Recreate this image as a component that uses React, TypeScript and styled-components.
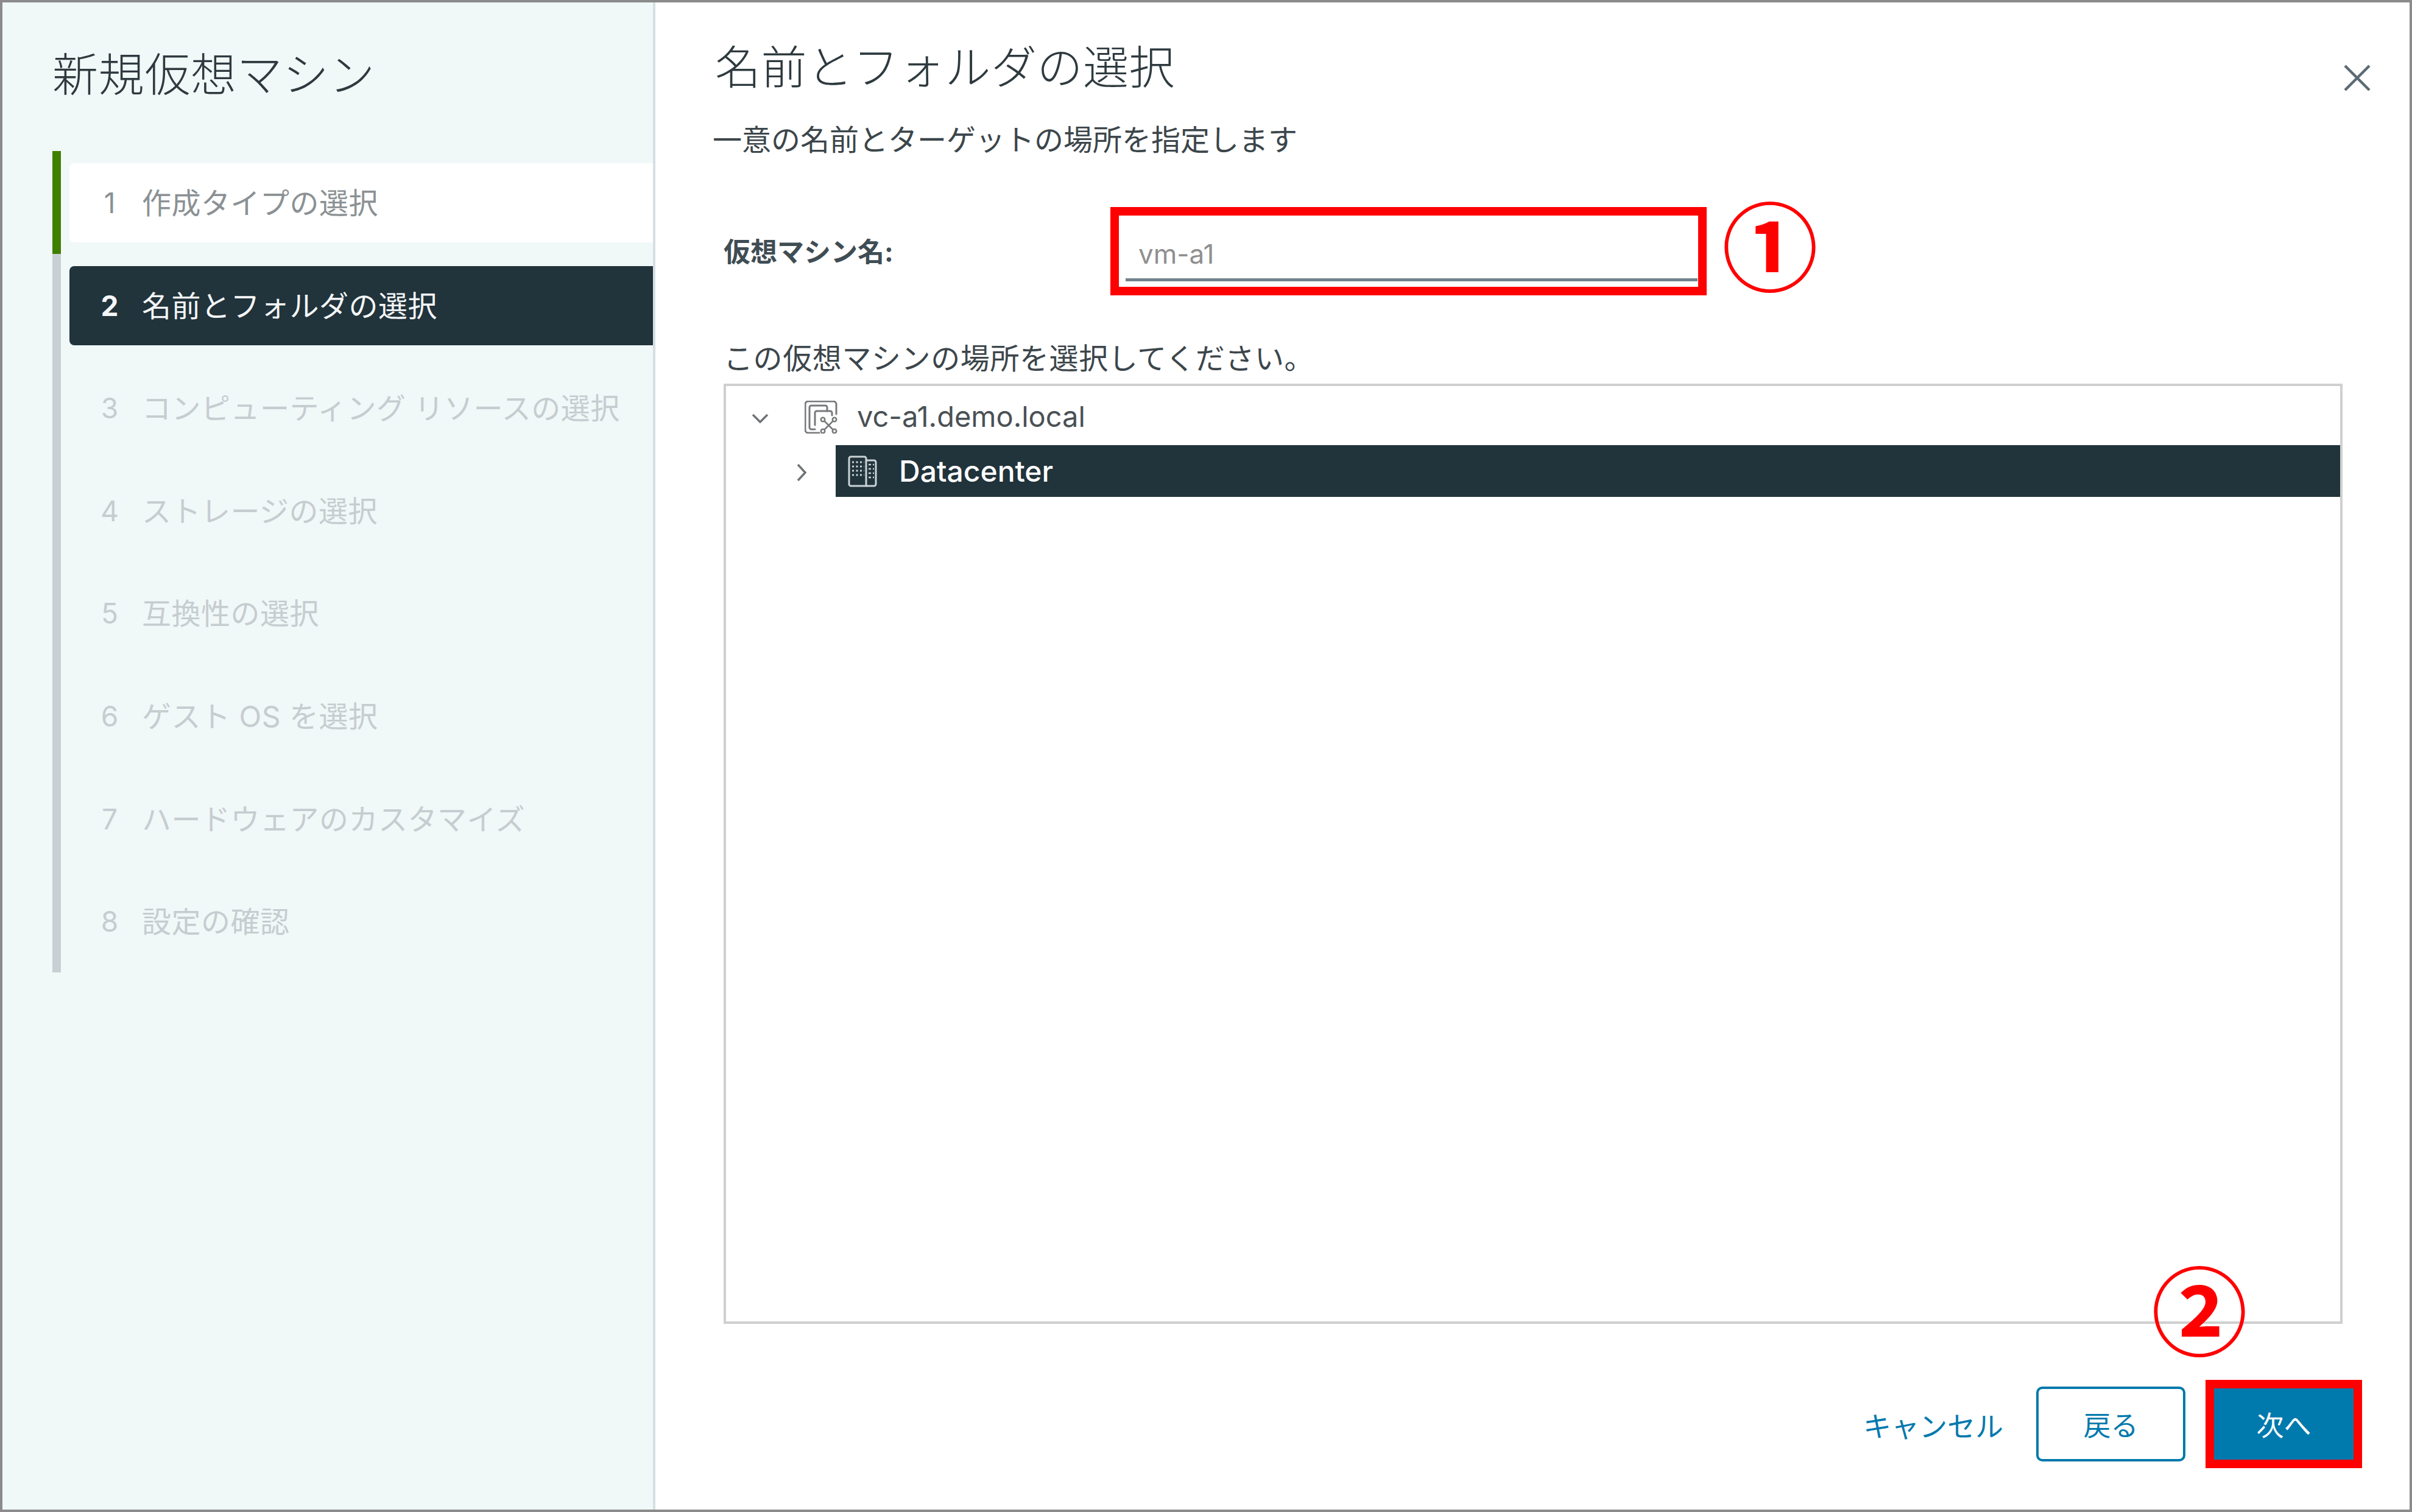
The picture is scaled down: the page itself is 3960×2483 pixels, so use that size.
import React from "react";
import styled, { createGlobalStyle } from "styled-components";

const FONT = `Inter, "Noto Sans CJK JP", sans-serif`;

const Global = createGlobalStyle`
  html, body { margin: 0; padding: 0; background: #fff; }
  body { font-family: ${FONT}; }
  * { box-sizing: border-box; }
`;

const Frame = styled.div`
  position: relative;
  width: 3960px;
  height: 2483px;
  display: flex;
  border: 4px solid #8b8b8b;
  background: #fff;
  overflow: hidden;
  font-family: ${FONT};
`;

const Sidebar = styled.aside`
  width: 1072px;
  flex: none;
  padding-left: 82px;
  background: #f1f8f8;
  border-right: 4px solid #d7dfe3;
  display: flex;
  flex-direction: column;
`;

const SideTitle = styled.h1`
  margin: 0;
  height: 244px;
  padding-top: 77px;
  font-size: 75px;
  line-height: 84px;
  font-weight: 300;
  letter-spacing: 0.7px;
  color: #2e3a3f;
  white-space: nowrap;
`;

const Steps = styled.ol`
  list-style: none;
  margin: 0;
  padding: 0;
`;

const StepRow = styled.li<{ $done?: boolean }>`
  height: 168.6px;
  padding: 20px 0 0 14px;
  border-left: 14px solid ${(p) => (p.$done ? "#3f7f00" : "#c9d0d4")};
`;

const StepBody = styled.div<{ $state: "done" | "current" | "todo" }>`
  height: 130px;
  display: flex;
  align-items: center;
  padding-left: 46px;
  border-radius: 8px 0 0 8px;
  font-size: 48px;
  white-space: nowrap;
  background: ${(p) =>
    p.$state === "done" ? "#fff" : p.$state === "current" ? "#21333b" : "transparent"};
  color: ${(p) =>
    p.$state === "done" ? "#8b9194" : p.$state === "current" ? "#f4f6f7" : "#c6cdd0"};
`;

const StepNum = styled.span<{ $bold?: boolean }>`
  width: 40px;
  margin-right: 33px;
  text-align: center;
  font-size: 46px;
  font-weight: ${(p) => (p.$bold ? 700 : 400)};
`;

const StepText = styled.span`
  padding-bottom: 6px;
  letter-spacing: 0.5px;
`;

const Main = styled.main`
  flex: 1;
  min-width: 0;
  padding: 0 110px 0 98px;
  display: flex;
  flex-direction: column;
`;

const HeaderRow = styled.header`
  height: 204px;
  margin-right: -46px;
  display: flex;
  justify-content: space-between;
  align-items: flex-start;
`;

const PageTitle = styled.h2`
  margin: 0;
  padding-top: 65px;
  font-size: 75px;
  line-height: 84px;
  font-weight: 300;
  letter-spacing: 0.5px;
  color: #2e3a3f;
  white-space: nowrap;
`;

const CloseBtn = styled.button`
  margin-top: 102px;
  width: 44px;
  height: 44px;
  padding: 0;
  border: 0;
  background: none;
  display: block;
`;

const Subtitle = styled.p`
  margin: 0 0 0 -4px;
  height: 44px;
  font-size: 48px;
  line-height: 44px;
  color: #3c464b;
  white-space: nowrap;
`;

const Form = styled.div`
  padding-left: 14px;
  display: flex;
  flex-direction: column;
  flex: none;
`;

const NameRow = styled.div`
  margin-top: 88px;
  height: 145px;
  display: flex;
  align-items: center;
`;

const NameLabel = styled.label`
  width: 635px;
  flex: none;
  padding-bottom: 4px;
  font-size: 44px;
  font-weight: 700;
  color: #3f4d54;
  white-space: nowrap;
`;

const NameField = styled.div`
  width: 979px;
  height: 145px;
  border: 14px solid #ff0000;
  padding: 0 1px 0 11px;
  background: #fff;
`;

const NameInput = styled.div`
  height: 108px;
  padding: 33px 0 0 21px;
  border-bottom: 5px solid #71848c;
  font-size: 44px;
  line-height: 60px;
  color: #8f8f8f;
`;

const Callout = styled.span<{ $x: number; $y: number }>`
  position: absolute;
  left: ${(p) => p.$x}px;
  top: ${(p) => p.$y}px;
  width: 170px;
  height: 170px;
  display: flex;
  align-items: center;
  justify-content: center;
  font-family: "Noto Sans CJK JP", sans-serif;
  font-size: 158px;
  line-height: 170px;
  font-weight: 700;
  color: #ff0000;
  z-index: 2;
`;

const LocationLabel = styled.div`
  margin-top: 74px;
  height: 71px;
  font-size: 48px;
  line-height: 60px;
  letter-spacing: 0.6px;
  color: #3c464b;
  white-space: nowrap;
`;

const Tree = styled.div`
  height: 1544px;
  border: 4px solid #cfcfcf;
  padding-top: 20px;
  flex: none;
`;

const TreeRow = styled.div<{ $selected?: boolean; $indent: number }>`
  display: flex;
  align-items: center;
  margin-left: ${(p) => p.$indent}px;
  height: ${(p) => (p.$selected ? 85 : 62)}px;
  margin-top: ${(p) => (p.$selected ? 15 : 0)}px;
`;

const Chevron = styled.svg<{ $w: number }>`
  width: ${(p) => p.$w}px;
  flex: none;
  display: block;
  margin-top: 4px;
`;

const TreeIconWrap = styled.span`
  display: inline-flex;
  flex: none;
  margin: 0 32px 0 59px;
`;

const NodeLabel = styled.span`
  padding-bottom: 4px;
  font-size: 47px;
  color: #4a5155;
  white-space: nowrap;
`;

const SelectedBar = styled.div`
  flex: 1;
  height: 85px;
  margin-left: 48px;
  padding-left: 20px;
  display: flex;
  align-items: center;
  background: #21333b;
  color: #fff;
  font-size: 48px;
  font-weight: 500;
`;

const SelectedLabel = styled.span`
  margin-left: 36px;
  white-space: nowrap;
`;

const Footer = styled.footer`
  margin-top: 92px;
  margin-right: -32px;
  height: 145px;
  display: flex;
  justify-content: flex-end;
  align-items: center;
`;

const LinkBtn = styled.button`
  border: 0;
  background: none;
  padding: 0;
  margin-right: 54px;
  font-family: ${FONT};
  font-size: 46px;
  color: #0079ad;
`;

const OutlineBtn = styled.button`
  width: 245px;
  height: 123px;
  margin-right: 33px;
  padding: 0;
  border: 4px solid #0079ad;
  border-radius: 10px;
  background: #fff;
  font-family: ${FONT};
  font-size: 45px;
  color: #0079ad;
`;

const PrimaryBtn = styled.button`
  width: 257px;
  height: 145px;
  padding: 0;
  border: 14px solid #ff0000;
  background: #0079ad;
  font-family: ${FONT};
  font-size: 45px;
  color: #fff;
`;

const VCenterIcon = () => (
  <svg width="54" height="54" viewBox="0 0 54 54" fill="none" stroke="#777a7c" strokeWidth="3" strokeLinecap="round">
    <path d="M52 22V6a5 5 0 0 0-5-5H6a5 5 0 0 0-5 5v42a5 5 0 0 0 5 5h18" />
    <path d="M37 17V11a3 3 0 0 0-3-3H11a3 3 0 0 0-3 3v33a3 3 0 0 0 3 3h6" />
    <path d="M45 24v-4a3 3 0 0 0-3-3H20a3 3 0 0 0-3 3v20" />
    <g strokeWidth="2.6">
      <circle cx="30" cy="31" r="3.2" />
      <circle cx="49" cy="31" r="3.2" />
      <circle cx="30" cy="50" r="3.2" />
      <circle cx="49" cy="50" r="3.2" />
      <path d="M33 34l13 13M46 34L33 47" />
    </g>
  </svg>
);

const BuildingIcon = () => (
  <svg width="48" height="52" viewBox="0 0 48 52" fill="none" stroke="#cbd3d6">
    <path d="M30 50H5a3 3 0 0 1-3-3V5a3 3 0 0 1 3-3h22a3 3 0 0 1 3 3z" strokeWidth="3" />
    <path d="M30 8h13a3 3 0 0 1 3 3v36a3 3 0 0 1-3 3H30" strokeWidth="3" />
    <g strokeWidth="3" strokeDasharray="3 3.5">
      <path d="M7 11h20M7 18h20M7 25h20M7 32h20" />
    </g>
    <g strokeWidth="2.4" strokeDasharray="4 3">
      <path d="M34 15h9M34 22h9M34 29h9M34 36h9" />
    </g>
  </svg>
);

const steps = [
  "作成タイプの選択",
  "名前とフォルダの選択",
  "コンピューティング リソースの選択",
  "ストレージの選択",
  "互換性の選択",
  "ゲスト OS を選択",
  "ハードウェアのカスタマイズ",
  "設定の確認",
];

export default function App() {
  return (
    <>
      <Global />
      <Frame>
        <Sidebar>
          <SideTitle>新規仮想マシン</SideTitle>
          <Steps>
            {steps.map((s, i) => {
              const state = i === 0 ? "done" : i === 1 ? "current" : "todo";
              return (
                <StepRow key={s} $done={i === 0}>
                  <StepBody $state={state}>
                    <StepNum $bold={i === 1}>{i + 1}</StepNum>
                    <StepText>{s}</StepText>
                  </StepBody>
                </StepRow>
              );
            })}
          </Steps>
        </Sidebar>
        <Main>
          <HeaderRow>
            <PageTitle>名前とフォルダの選択</PageTitle>
            <CloseBtn aria-label="閉じる">
              <svg width="44" height="44" viewBox="0 0 44 44" stroke="#5b6b73" strokeWidth="4.5" fill="none">
                <path d="M2 2l40 40M42 2L2 42" />
              </svg>
            </CloseBtn>
          </HeaderRow>
          <Subtitle>一意の名前とターゲットの場所を指定します</Subtitle>
          <Form>
            <NameRow>
              <NameLabel>仮想マシン名:</NameLabel>
              <NameField>
                <NameInput>vm-a1</NameInput>
              </NameField>
            </NameRow>
            <LocationLabel>この仮想マシンの場所を選択してください。</LocationLabel>
            <Tree>
              <TreeRow $indent={42}>
                <Chevron $w={28} height="16" viewBox="0 0 28 16" fill="none" stroke="#6f7477" strokeWidth="3.5">
                  <path d="M2 2l12 12L26 2" />
                </Chevron>
                <TreeIconWrap>
                  <VCenterIcon />
                </TreeIconWrap>
                <NodeLabel>vc-a1.demo.local</NodeLabel>
              </TreeRow>
              <TreeRow $selected $indent={116}>
                <Chevron $w={16} height="30" viewBox="0 0 16 30" fill="none" stroke="#6f7477" strokeWidth="3.5">
                  <path d="M2 2l12 13L2 28" />
                </Chevron>
                <SelectedBar>
                  <BuildingIcon />
                  <SelectedLabel>Datacenter</SelectedLabel>
                </SelectedBar>
              </TreeRow>
            </Tree>
          </Form>
          <Footer>
            <LinkBtn>キャンセル</LinkBtn>
            <OutlineBtn>戻る</OutlineBtn>
            <PrimaryBtn>次へ</PrimaryBtn>
          </Footer>
        </Main>
        <Callout $x={2817} $y={309}>①</Callout>
        <Callout $x={3522} $y={2057}>②</Callout>
      </Frame>
    </>
  );
}
